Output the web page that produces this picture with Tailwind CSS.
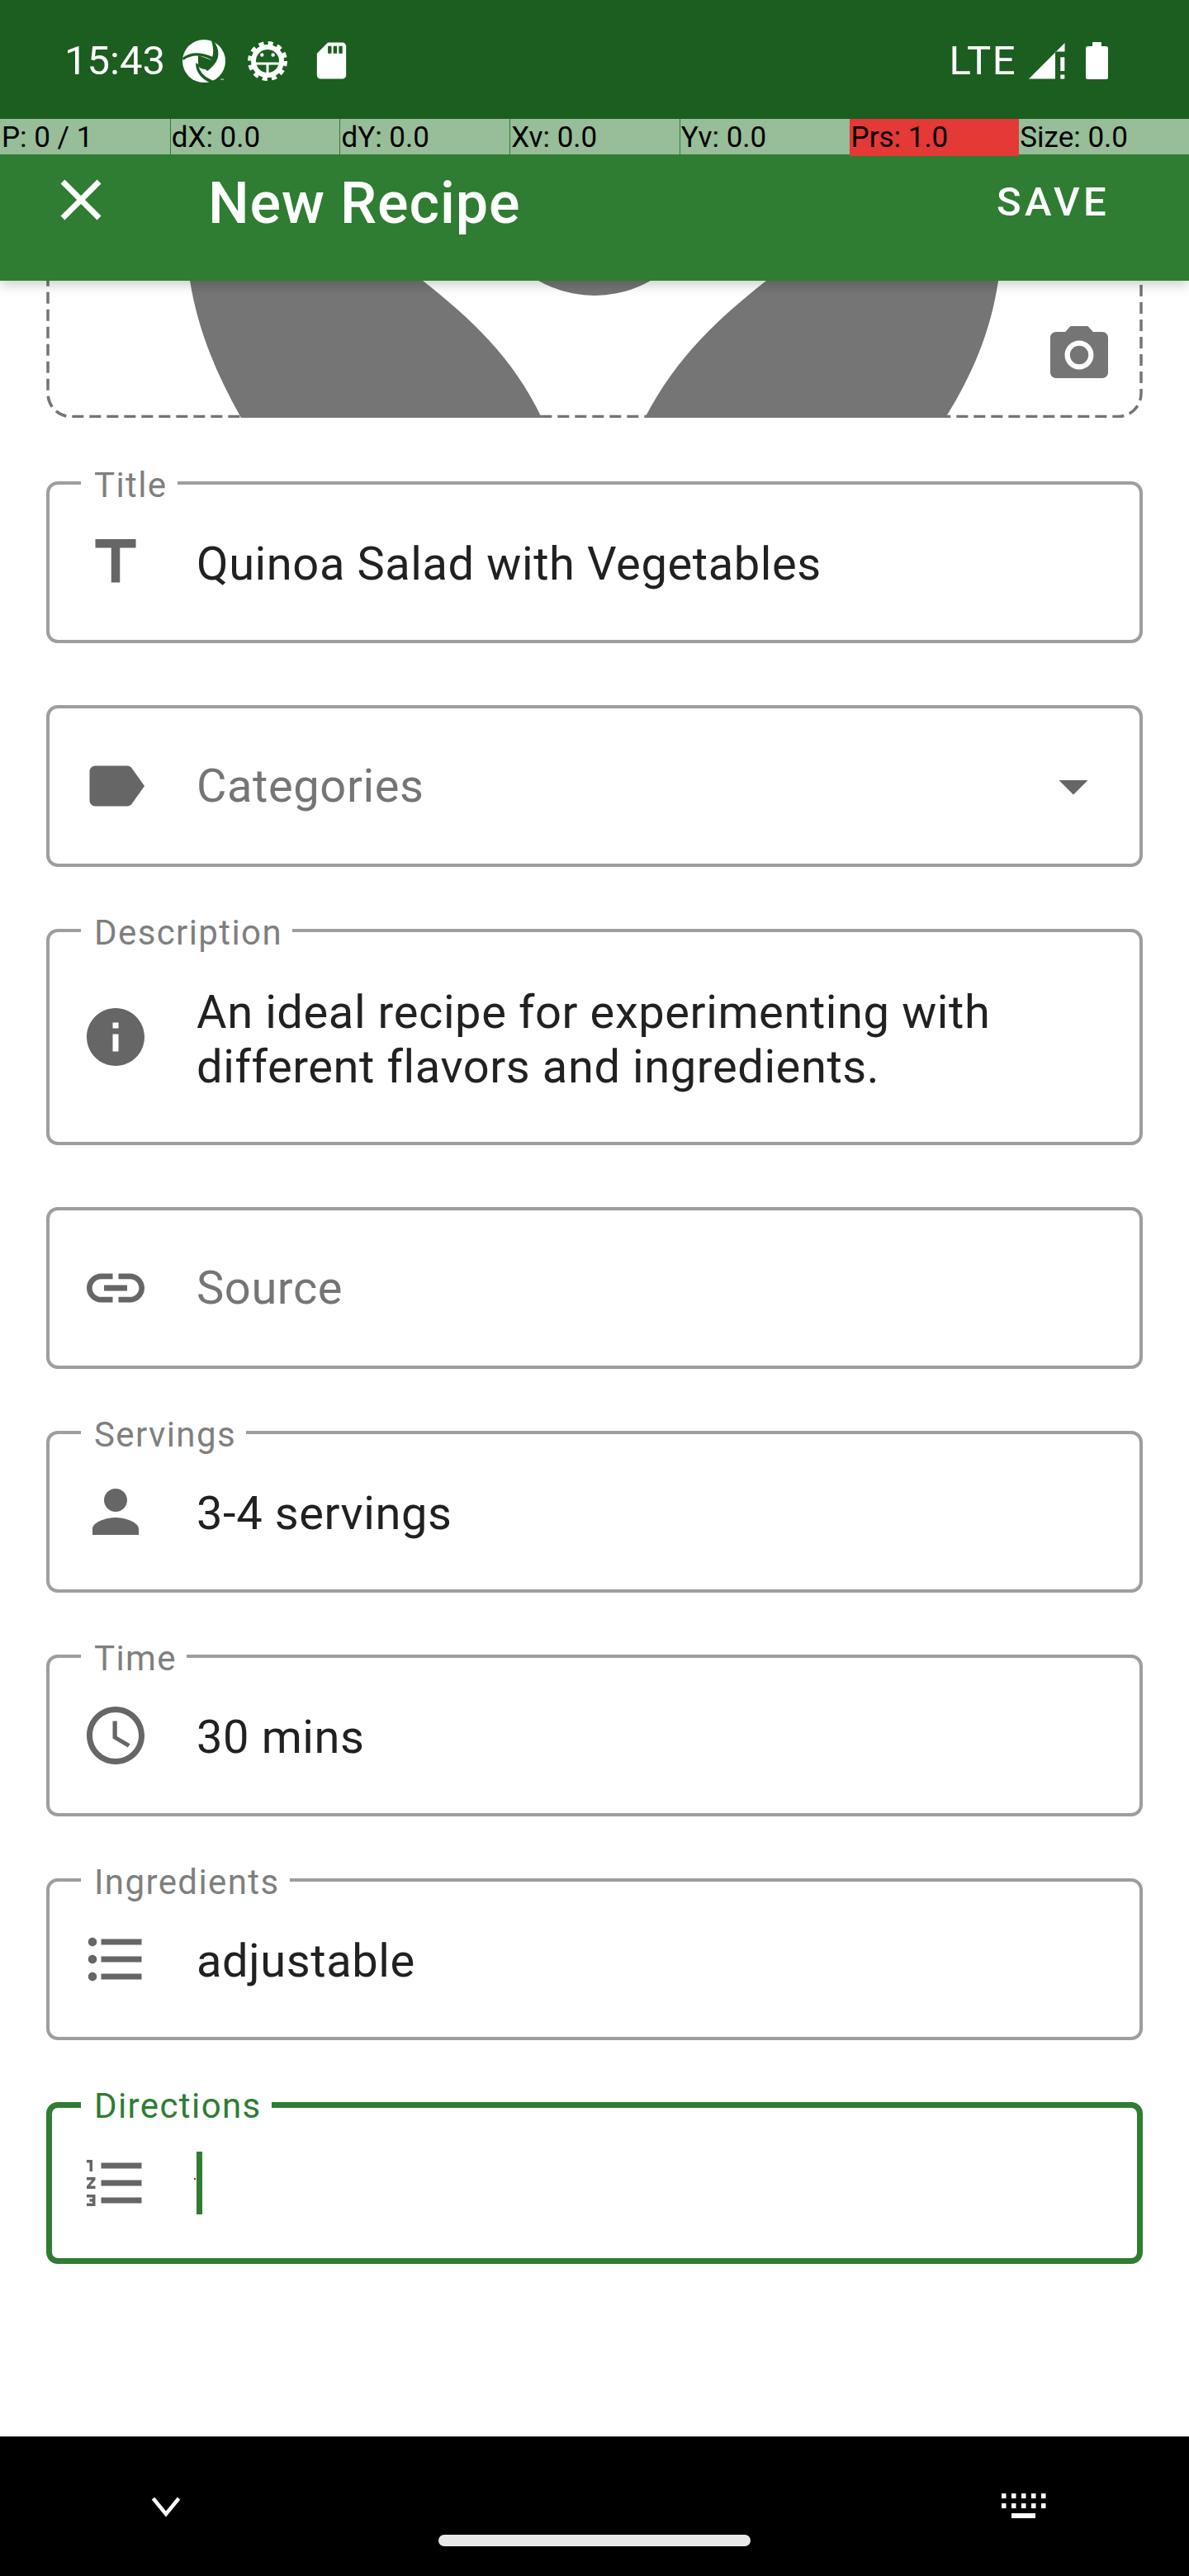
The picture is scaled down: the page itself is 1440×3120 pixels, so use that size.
<!DOCTYPE html>
<html>
<head>
<meta charset="utf-8">
<script src="https://cdn.jsdelivr.net/npm/@tailwindcss/browser@4"></script>
</head>
<body class="bg-white">
<div class="w-[1440px] h-[3120px] flex flex-col overflow-hidden font-['Roboto',sans-serif] bg-white">
  <header class="relative z-10 shadow-[0_5px_14px_rgba(0,0,0,0.2)]">
    <div class="h-[144px] bg-[#1b5e20] flex items-center pt-[3px] pl-[78px] text-white">
      <span class="text-[49px] leading-[60px] w-[122px] whitespace-nowrap">15:43</span>
      <svg class="w-[52px] h-[52px] ml-[21px] overflow-visible" viewBox="0 0 52 52">
        <circle cx="26" cy="26" r="26" fill="#fff"/>
        <path d="M38 2 Q52 22 30 38 L27 35 Q42 22 35 1 Z" fill="#1b5e20"/>
        <path d="M0 22 Q14 11 37 21 L36 25 Q16 14 1 25 Z" fill="#1b5e20"/>
        <path d="M19 30 Q21 44 38 50 L33 52 Q16 44 16 28 Z" fill="#1b5e20"/>
        <path d="M19 19 L36 25 L29 36 Q22 36 19 32 Z" fill="#1b5e20"/>
        <rect x="46" y="47.5" width="4" height="1.2" fill="#fff" opacity="0.7"/>
      </svg>
      <svg class="w-[50px] h-[48px] ml-[26px]" viewBox="0 0 50 48">
        <circle cx="25" cy="24" r="21.5" fill="none" stroke="#fff" stroke-width="5" stroke-dasharray="6 5.26"/>
        <circle cx="25" cy="24" r="17" fill="none" stroke="#fff" stroke-width="6"/>
        <rect x="9" y="25.5" width="32" height="3" fill="#fff"/>
        <rect x="23.5" y="26" width="3" height="16" fill="#fff"/>
        <circle cx="18.3" cy="16.5" r="2.2" fill="#fff"/>
        <circle cx="31.7" cy="16.5" r="2.2" fill="#fff"/>
      </svg>
      <svg class="w-[53px] h-[53px] ml-[26px]" viewBox="0 0 24 24" fill="#fff"><path d="M18 2h-8L4.02 8 4 20c0 1.1.9 2 2 2h12c1.1 0 2-.9 2-2V4c0-1.1-.9-2-2-2zm-6 6h-2V4h2v4zm3 0h-2V4h2v4zm3 0h-2V4h2v4z"/></svg>
      <span class="ml-auto text-[49px] leading-[60px] tracking-[1.5px] whitespace-nowrap">LTE</span>
      <svg class="w-[44px] h-[44px] ml-[15px]" viewBox="0 0 44 44" fill="#fff">
        <polygon points="0,43.5 43.5,0 43.5,10.6 32,10.6 32,43.5"/>
        <rect x="38.3" y="17.3" width="5" height="16.7"/>
        <rect x="38.3" y="38.5" width="5" height="5"/>
      </svg>
      <svg class="w-[27px] h-[45px] ml-[25px] mr-[98px]" viewBox="0 0 27 45" fill="#fff">
        <rect x="8" y="0" width="11" height="6" rx="1"/>
        <rect x="0" y="5" width="27" height="40" rx="2.5"/>
      </svg>
    </div>
    <div class="h-[43px] grid grid-cols-7 bg-[#97bd99] text-black text-[35px] leading-[45px] whitespace-nowrap">
      <div class="pl-[2px]">P: 0 / 1</div>
      <div class="pl-[1px] border-l border-[#2e7d32]">dX: 0.0</div>
      <div class="pl-[1px] border-l border-[#2e7d32]">dY: 0.0</div>
      <div class="pl-[1px] border-l border-[#2e7d32]">Xv: 0.0</div>
      <div class="pl-[1px] border-l border-[#2e7d32]">Yv: 0.0</div>
      <div class="pl-[2px] bg-[#e53935]">Prs: 1.0</div>
      <div class="pl-[1px]">Size: 0.0</div>
    </div>
    <div class="h-[153px] bg-[#2e7d32] flex items-start text-white">
      <svg class="w-[84px] h-[84px] ml-[56px] mt-[13px]" viewBox="0 0 24 24" fill="#fff"><path d="M19 6.41L17.59 5 12 10.59 6.41 5 5 6.41 10.59 12 5 17.59 6.41 19 12 13.41 17.59 19 19 17.59 13.41 12z"/></svg>
      <h1 class="ml-[112px] mt-[17px] text-[70px] leading-[84px] font-medium tracking-[0.9px] whitespace-nowrap">New Recipe</h1>
      <span class="ml-auto mr-[96px] mt-[28px] text-[49px] leading-[60px] font-medium tracking-[4.4px]">SAVE</span>
    </div>
  </header>

  <main class="flex-1 flex flex-col">
    <svg class="w-[1440px] h-[166px] shrink-0" viewBox="0 339 1440 166">
      <rect x="58" y="200" width="1324" height="303.5" rx="28" fill="none" stroke="#757575" stroke-width="3.5" stroke-dasharray="14 7"/>
      <circle cx="720" cy="220" r="137" fill="#757575"/>
      <path d="M230 339 C240 400 262 452 292 505 L656 505 C620 430 570 385 512 339 Z" fill="#757575"/>
      <path d="M928 339 C870 385 820 430 781 505 L1145 505 C1178 452 1200 400 1209 339 Z" fill="#757575"/>
      <g transform="translate(1265 387) scale(3.5)" fill="#757575"><path d="M12 15.2a3.2 3.2 0 1 0 0-6.4 3.2 3.2 0 0 0 0 6.4z" /><path d="M9 2L7.17 4H4c-1.1 0-2 .9-2 2v12c0 1.1.9 2 2 2h16c1.1 0 2-.9 2-2V6c0-1.1-.9-2-2-2h-3.17L15 2H9zm3 15c-2.76 0-5-2.24-5-5s2.24-5 5-5 5 2.24 5 5-2.24 5-5 5z"/></g>
    </svg>

    <form class="mt-[77px] px-[56px] flex flex-col gap-[75px] text-[56px] leading-[66px] text-[#212121] tracking-[0.6px]">
      <div class="relative h-[196px] border-4 border-[#9e9e9e] rounded-[14px] flex items-center">
        <span class="absolute left-[38px] top-[-19px] pl-[16px] pr-[12px] bg-white text-[42px] leading-[40px] tracking-[1.4px] text-[#7f7f7f]">Title</span>
        <svg class="w-[84px] h-[84px] ml-[38px] shrink-0" viewBox="0 0 24 24" fill="#666"><path d="M5 4v3h5.5v12h3V7H19V4z"/></svg>
        <span class="ml-[56px] mt-[4px]">Quinoa Salad with Vegetables</span>
      </div>

      <div class="relative h-[196px] border-4 border-[#9e9e9e] rounded-[14px] flex items-center">
        <svg class="w-[84px] h-[84px] ml-[38px] shrink-0" viewBox="0 0 24 24" fill="#666"><path d="M17.63 5.84C17.27 5.33 16.67 5 16 5L5 5.01C3.9 5.01 3 5.9 3 7v10c0 1.1.9 1.99 2 1.99L16 19c.67 0 1.27-.33 1.63-.84L22 12l-4.37-6.16z"/></svg>
        <span class="ml-[56px] text-[#757575]">Categories</span>
        <svg class="w-[84px] h-[84px] ml-auto mr-[38px] shrink-0" viewBox="0 0 24 24" fill="#666"><path d="M7 10l5 5 5-5z"/></svg>
      </div>

      <div class="relative h-[262px] border-4 border-[#9e9e9e] rounded-[14px] flex items-center">
        <span class="absolute left-[38px] top-[-19px] pl-[16px] pr-[12px] bg-white text-[42px] leading-[40px] tracking-[1.4px] text-[#7f7f7f]">Description</span>
        <svg class="w-[84px] h-[84px] ml-[38px] shrink-0" viewBox="0 0 24 24" fill="#666"><path d="M12 2C6.48 2 2 6.48 2 12s4.48 10 10 10 10-4.48 10-10S17.52 2 12 2zm1 15h-2v-6h2v6zm0-8h-2V7h2v2z"/></svg>
        <span class="ml-[56px] mt-[5px] w-[1060px]">An ideal recipe for experimenting with different flavors and ingredients.</span>
      </div>

      <div class="relative h-[196px] border-4 border-[#9e9e9e] rounded-[14px] flex items-center">
        <svg class="w-[84px] h-[84px] ml-[38px] shrink-0" viewBox="0 0 24 24" fill="#666"><path d="M3.9 12c0-1.71 1.39-3.1 3.1-3.1h4V7H7c-2.76 0-5 2.24-5 5s2.24 5 5 5h4v-1.9H7c-1.71 0-3.1-1.39-3.1-3.1zM8 13h8v-2H8v2zm9-6h-4v1.9h4c1.71 0 3.1 1.39 3.1 3.1s-1.39 3.1-3.1 3.1h-4V17h4c2.76 0 5-2.24 5-5s-2.24-5-5-5z"/></svg>
        <span class="ml-[56px] text-[#757575]">Source</span>
      </div>

      <div class="relative h-[196px] border-4 border-[#9e9e9e] rounded-[14px] flex items-center">
        <span class="absolute left-[38px] top-[-19px] pl-[16px] pr-[12px] bg-white text-[42px] leading-[40px] tracking-[1.4px] text-[#7f7f7f]">Servings</span>
        <svg class="w-[84px] h-[84px] ml-[38px] shrink-0" viewBox="0 0 24 24" fill="#666"><path d="M12 12c2.21 0 4-1.79 4-4s-1.79-4-4-4-4 1.79-4 4 1.79 4 4 4zm0 2c-2.67 0-8 1.34-8 4v2h16v-2c0-2.66-5.33-4-8-4z"/></svg>
        <span class="ml-[56px] mt-[4px]">3-4 servings</span>
      </div>

      <div class="relative h-[196px] border-4 border-[#9e9e9e] rounded-[14px] flex items-center">
        <span class="absolute left-[38px] top-[-19px] pl-[16px] pr-[12px] bg-white text-[42px] leading-[40px] tracking-[1.4px] text-[#7f7f7f]">Time</span>
        <svg class="w-[84px] h-[84px] ml-[38px] shrink-0" viewBox="0 0 24 24" fill="#666"><path d="M11.99 2C6.47 2 2 6.48 2 12s4.47 10 9.99 10C17.52 22 22 17.52 22 12S17.52 2 11.99 2zM12 20c-4.42 0-8-3.58-8-8s3.58-8 8-8 8 3.58 8 8-3.58 8-8 8zm.5-13H11v6l5.25 3.15.75-1.23-4.5-2.67z"/></svg>
        <span class="ml-[56px] mt-[4px]">30 mins</span>
      </div>

      <div class="relative h-[196px] border-4 border-[#9e9e9e] rounded-[14px] flex items-center">
        <span class="absolute left-[38px] top-[-19px] pl-[16px] pr-[12px] bg-white text-[42px] leading-[40px] tracking-[1.4px] text-[#7f7f7f]">Ingredients</span>
        <svg class="w-[84px] h-[84px] ml-[38px] shrink-0" viewBox="0 0 24 24" fill="#666"><path d="M4 10.5c-.83 0-1.5.67-1.5 1.5s.67 1.5 1.5 1.5 1.5-.67 1.5-1.5-.67-1.5-1.5-1.5zm0-6c-.83 0-1.5.67-1.5 1.5S3.17 7.5 4 7.5 5.5 6.83 5.5 6 4.83 4.5 4 4.5zm0 12c-.83 0-1.5.68-1.5 1.5s.68 1.5 1.5 1.5 1.5-.68 1.5-1.5-.67-1.5-1.5-1.5zM7 19h14v-2H7v2zm0-6h14v-2H7v2zm0-8v2h14V5H7z"/></svg>
        <span class="ml-[56px] mt-[4px]">adjustable</span>
      </div>

      <div class="relative h-[196px] border-[7px] border-[#2e7d32] rounded-[14px] flex items-center">
        <span class="absolute left-[35px] top-[-22px] pl-[16px] pr-[12px] bg-white text-[42px] leading-[40px] tracking-[1.4px] text-[#2e7d32]">Directions</span>
        <svg class="w-[84px] h-[84px] ml-[35px] shrink-0" viewBox="0 0 24 24" fill="#666"><path d="M2 17h2v.5H3v1h1v.5H2v1h3v-4H2v1zm1-9h1V4H2v1h1v3zm-1 3h1.8L2 13.1v.9h3v-1H3.2L5 10.9V10H2v1zm5-6v2h14V5H7zm0 14h14v-2H7v2zm0-6h14v-2H7v2z"/></svg>
        <span class="relative ml-[56px] w-[7px] h-[76px] bg-[#2e7d32]"><span class="absolute left-[-3px] top-[32px] w-[2px] h-[2px] bg-[#ff0000]"></span></span>
      </div>
    </form>
  </main>

  <footer class="relative h-[169px] shrink-0 bg-black flex items-start">
    <svg class="w-[40px] h-[30px] ml-[181px] mt-[72px]" viewBox="0 0 40 30"><path d="M4.5 3 L20 22 L35.5 3" fill="none" stroke="#fff" stroke-width="4.5"/></svg>
    <svg class="w-[54px] h-[30px] ml-auto mr-[173px] mt-[69px]" viewBox="0 0 54 30" fill="#fff">
      <rect x="0" y="0" width="5.5" height="6"/><rect x="12" y="0" width="5.5" height="6"/><rect x="24" y="0" width="5.5" height="6"/><rect x="36" y="0" width="5.5" height="6"/><rect x="48" y="0" width="5.5" height="6"/>
      <rect x="0" y="12" width="5.5" height="6"/><rect x="12" y="12" width="5.5" height="6"/><rect x="24" y="12" width="5.5" height="6"/><rect x="36" y="12" width="5.5" height="6"/><rect x="48" y="12" width="5.5" height="6"/>
      <rect x="12" y="24" width="29" height="6"/>
    </svg>
    <div class="absolute left-[531px] top-[119px] w-[378px] h-[14px] rounded-full bg-[#e8e8e8]"></div>
  </footer>
</div>
</body>
</html>
